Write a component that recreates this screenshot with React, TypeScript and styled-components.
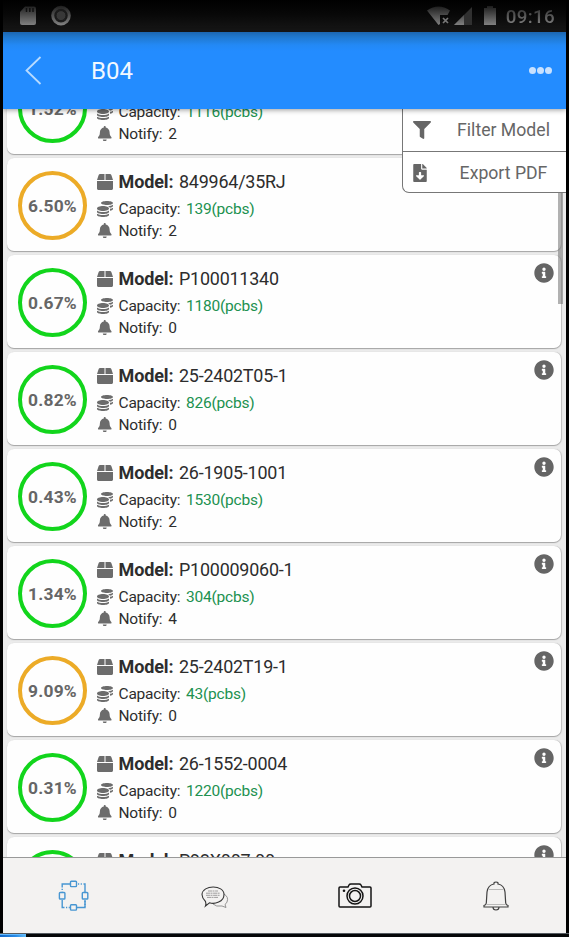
import React from 'react';
import styled, { createGlobalStyle } from 'styled-components';
import { FaBell, FaBox, FaCoins, FaFileDownload, FaFilter, FaInfoCircle } from 'react-icons/fa';

const GlobalStyle = createGlobalStyle`
  * { box-sizing: border-box; }
  body { margin: 0; background: #000; overflow: hidden; }
`;

const Screen = styled.div`
  width: 569px;
  height: 937px;
  display: flex;
  flex-direction: column;
  padding: 0 3px;
  background: #000;
  font-family: Roboto, 'Liberation Sans', sans-serif;
  color: #2d2d2d;
  overflow: hidden;
`;

const StatusBar = styled.div`
  height: 32px;
  flex: none;
  display: flex;
  align-items: center;
  justify-content: space-between;
  background: linear-gradient(#000 0, #080808 45%, #171717 100%);
`;

const StatusLabel = styled.span`
  font-size: 18.8px;
  font-weight: 500;
  line-height: 32px;
  letter-spacing: 0.3px;
  color: transparent;
  background: linear-gradient(#2b2b2b 20%, #808080 75%);
  background-clip: text;
  padding: 1px 11px 0 8px;
`;

const StatusGroup = styled.div`
  display: flex;
  align-items: center;
`;

const Header = styled.header`
  height: 76.5px;
  flex: none;
  display: flex;
  align-items: center;
  padding: 0 14px 0 21px;
  background: linear-gradient(#1c66b0 0, #2078ce 5px, #2389f5 13px, #238cff 19px);
  color: #f2f8ff;
  box-shadow: 0 1px 5px rgba(0, 0, 0, 0.4);
  z-index: 3;
`;

const Title = styled.h1`
  margin: 1px 0 0 47px;
  flex: 1;
  font-size: 24px;
  line-height: 28px;
  font-weight: 400;
`;

const Dots = styled.div`
  display: flex;
  gap: 1px;
`;

const Dot = styled.i`
  width: 7px;
  height: 7px;
  border-radius: 50%;
  background: #c8e1ff;
`;

const Body = styled.main`
  height: 748.5px;
  flex: none;
  position: relative;
  overflow: hidden;
  background: #ebebeb;
`;

const List = styled.div`
  display: flex;
  flex-direction: column;
  gap: 4px;
  padding: 0 5px 0 4px;
  margin-top: -47.2px;
`;

const Card = styled.article`
  height: 93px;
  flex: none;
  display: flex;
  padding: 0 0 0 11px;
  background: #fefefe;
  border-radius: 7px;
  box-shadow: 0 1px 1px #a4a4a4, 1px 0 1px #c2c2c2;
`;

const Ring = styled.div<{ $warn?: boolean }>`
  width: 69px;
  height: 69px;
  margin: 13px 10px 0 0;
  flex: none;
  display: flex;
  align-items: center;
  justify-content: center;
  border: 4px solid ${p => (p.$warn ? '#ecab27' : '#12d51c')};
  border-radius: 50%;
  font-size: 17.4px;
  font-weight: 700;
  letter-spacing: 0.2px;
  color: #666;
`;

const Details = styled.div`
  flex: 1;
  padding-top: 10.2px;
`;

const Row = styled.div<{ $height: number }>`
  height: ${p => p.$height}px;
  display: flex;
  align-items: center;
  white-space: nowrap;
  font-size: 15.5px;
  letter-spacing: -0.2px;
`;

const RowIcon = styled.span`
  width: 16px;
  margin-right: 5.5px;
  display: flex;
  justify-content: center;
  color: #6c6c6c;
`;

const ModelLabel = styled.strong`
  width: 60.5px;
  font-size: 18px;
  font-weight: 700;
  letter-spacing: -0.1px;
`;

const ModelValue = styled.span`
  font-size: 17.9px;
`;

const Capacity = styled.span`
  margin-left: 5.5px;
  color: #219150;
`;

const Count = styled.span`
  margin-left: 6px;
`;

const Info = styled.div`
  width: 27px;
  padding-top: 8px;
  color: #656565;
`;

const Menu = styled.div`
  position: absolute;
  top: 0;
  right: 0;
  width: 164px;
  height: 84px;
  background: #fff;
  border: 1px solid #777;
  border-top: 0;
  border-right: 0;
  border-radius: 0 0 0 7px;
  z-index: 2;
`;

const MenuItem = styled.div`
  height: 42px;
  display: grid;
  grid-template-columns: 36px 1fr;
  align-items: center;
  padding: 1px 8px 0 10px;
  font-size: 17.65px;
  color: #666;
  text-align: center;
  white-space: nowrap;
  & + & { border-top: 1px solid #777; }
  svg { display: block; }
  & + & svg { margin-left: -2.5px; }
`;

const ScrollThumb = styled.div`
  position: absolute;
  top: 84px;
  right: 3px;
  width: 5px;
  height: 111px;
  background: rgba(105, 105, 105, 0.52);
`;

const Nav = styled.nav`
  height: 76px;
  flex: none;
  display: grid;
  grid-template-columns: repeat(4, 1fr);
  place-items: center;
  padding: 1px 0 0 0;
  background: #f3f2f1;
  border-top: 1px solid #999;
  z-index: 2;
`;

const Desktop = styled.footer`
  height: 4px;
  margin: 0 -3px;
  border-top: 1px solid #555b61;
  background: #050708;
`;

const TaskStrip = styled.div`
  width: 26px;
  height: 3px;
  background: linear-gradient(90deg, #1268c9, #288be7 60%, #65bdf5);
  border-top: 1px solid #62baff;
`;

type Model = { rate: string; model: string; capacity: number; notify: number; warn?: boolean; info?: boolean };

const models: Model[] = [
  { rate: '1.52%', model: '26-1905-1002', capacity: 1116, notify: 2 },
  { rate: '6.50%', model: '849964/35RJ', capacity: 139, notify: 2, warn: true },
  { rate: '0.67%', model: 'P100011340', capacity: 1180, notify: 0, info: true },
  { rate: '0.82%', model: '25-2402T05-1', capacity: 826, notify: 0, info: true },
  { rate: '0.43%', model: '26-1905-1001', capacity: 1530, notify: 2, info: true },
  { rate: '1.34%', model: 'P100009060-1', capacity: 304, notify: 4, info: true },
  { rate: '9.09%', model: '25-2402T19-1', capacity: 43, notify: 0, warn: true, info: true },
  { rate: '0.31%', model: '26-1552-0004', capacity: 1220, notify: 0, info: true },
  { rate: '0.52%', model: 'P93X007-00', capacity: 920, notify: 0, info: true },
];

const StorageIcons = () => (
  <svg width="75" height="32" viewBox="3 0 75 32">
    <defs>
      <linearGradient id="storage" x1="0" y1="6" x2="0" y2="26" gradientUnits="userSpaceOnUse">
        <stop stopColor="#202020" /><stop offset="1" stopColor="#858585" />
      </linearGradient>
    </defs>
    <path d="M25 6.5h9q2 0 2 2V23q0 2-2 2H22q-2 0-2-2V12z" fill="url(#storage)" />
    <path d="M26.5 8v4M29.8 8v4M33 8v4" stroke="#101010" strokeWidth="1.5" />
    <circle cx="61" cy="15.6" r="8.3" fill="#1c1c1c" stroke="url(#storage)" strokeWidth="3" />
    <circle cx="61" cy="15.6" r="5" fill="#383838" stroke="#191919" />
  </svg>
);

const SignalIcons = () => (
  <svg width="74" height="32" viewBox="424 0 74 32">
    <defs>
      <linearGradient id="signal" x1="0" y1="6" x2="0" y2="26" gradientUnits="userSpaceOnUse">
        <stop stopColor="#1c1c1c" /><stop offset="1" stopColor="#858585" />
      </linearGradient>
    </defs>
    <path d="M427 10.5q11.5-8 23 0L447.5 15H440v9l-1.5 1z" fill="url(#signal)" />
    <path d="M443 18l5 5m0-5l-5 5" stroke="#777" strokeWidth="1.7" />
    <path d="M454 25L472 7v18z" fill="#303030" />
    <path d="M454 25l10-10v10z" fill="url(#signal)" />
    <path d="M487 6h6v2h3v17h-12V8h3z" fill="url(#signal)" />
  </svg>
);

const BackIcon = () => (
  <svg width="20" height="32" viewBox="0 0 20 32" fill="none">
    <path d="M16.5 3L2.5 16.5L16.5 30" stroke="#b8dbff" strokeWidth="1.8" />
  </svg>
);

const NetworkIcon = () => (
  <svg width="32" height="32" viewBox="-0.5 0 32 32" fill="none" stroke="#4796d2" strokeWidth="1.4">
    <path d="M13 4H4.7v3.5M19 27.5h8.5V20M4.7 20v7.5H7M27.5 12V4H26" />
    <path d="M4.7 8.8v3M8.5 27.5h4M20.5 4h5M27.5 21v6" strokeDasharray="1.2 1.5" />
    <rect x="13" y="1.3" width="6" height="5.3" rx=".8" /><rect x="13" y="24.8" width="6" height="5.3" rx=".8" />
    <rect x="1.9" y="12.5" width="5.5" height="6.5" rx=".8" /><rect x="24.8" y="12.5" width="5.5" height="6.5" rx=".8" />
  </svg>
);

const ChatIcon = () => (
  <svg width="30" height="26" viewBox="-1 -1 30 26" fill="none">
    <path d="M24 10q5 3 3 8q-1 2-2 2.5l1 3-4-1.5q-6 1-9-2" stroke="#888" strokeWidth=".9" />
    <path d="M5.5 17.5Q2 14 2 10.5C2.5 .5 24 .5 24 10.5C24 18 14.5 20.5 9.5 18.8L5.5 22q.8-2 0-4.5z" fill="#f3f2f1" stroke="#353535" strokeWidth="1.1" />
    <path d="M8 7h10M6 9.2h14M6 11.3h14M7 13.4h11" stroke="#888" strokeWidth=".8" strokeDasharray="4 .5 2 .6" />
  </svg>
);

const CameraIcon = () => (
  <svg width="34" height="26" viewBox="0 0 34 26" fill="none" stroke="#141414" strokeWidth="1.5">
    <path d="M2 4h8l1-2q.5-1 2-1h8q1.5 0 2 1l1 2h8q1 0 1 1v18q0 1-1 1H2q-1 0-1-1V5q0-1 1-1z" />
    <circle cx="17" cy="13" r="8" /><circle cx="17" cy="13" r="5.5" />
    <circle cx="6" cy="7.8" r="1.3" fill="#141414" stroke="none" />
  </svg>
);

const NavBellIcon = () => (
  <svg width="26" height="30" viewBox="0 0 26 30" fill="none" stroke="#404040" strokeWidth="1.2">
    <path d="M11 3q-.5-2 2-2t2 2q6 1 7 8l.7 11q.1 2 2.3 2.5V26H1v-1.5Q3.2 24 3.3 22L4 11q1-7 7-8z" />
    <path d="M10 26q0 3 3 3t3-3" />
    <path d="M6 8.5h14M4 23.5h18" stroke="#aaa" strokeWidth=".8" />
  </svg>
);

const ModelCard = ({ item }: { item: Model }) => (
  <Card>
    <Ring $warn={item.warn}>{item.rate}</Ring>
    <Details>
      <Row $height={26}>
        <RowIcon><FaBox size={16} /></RowIcon>
        <ModelLabel>Model:</ModelLabel><ModelValue>{item.model}</ModelValue>
      </Row>
      <Row $height={28}>
        <RowIcon><FaCoins size={16} /></RowIcon>
        <span>Capacity:</span><Capacity>{item.capacity}(pcbs)</Capacity>
      </Row>
      <Row $height={16}>
        <RowIcon><FaBell size={15.5} /></RowIcon>
        <span>Notify:</span><Count>{item.notify}</Count>
      </Row>
    </Details>
    {item.info && <Info><FaInfoCircle size={20} /></Info>}
  </Card>
);

export default function App() {
  return (
    <>
      <GlobalStyle />
      <Screen>
        <StatusBar>
          <StorageIcons />
          <StatusGroup><SignalIcons /><StatusLabel>09:16</StatusLabel></StatusGroup>
        </StatusBar>
        <Header>
          <BackIcon />
          <Title>B04</Title>
          <Dots><Dot /><Dot /><Dot /></Dots>
        </Header>
        <Body>
          <List>{models.map(item => <ModelCard key={item.model} item={item} />)}</List>
          <ScrollThumb />
          <Menu>
            <MenuItem><FaFilter size={18} /><span>Filter Model</span></MenuItem>
            <MenuItem><FaFileDownload size={18} /><span>Export PDF</span></MenuItem>
          </Menu>
        </Body>
        <Nav><NetworkIcon /><ChatIcon /><CameraIcon /><NavBellIcon /></Nav>
        <Desktop><TaskStrip /></Desktop>
      </Screen>
    </>
  );
}
